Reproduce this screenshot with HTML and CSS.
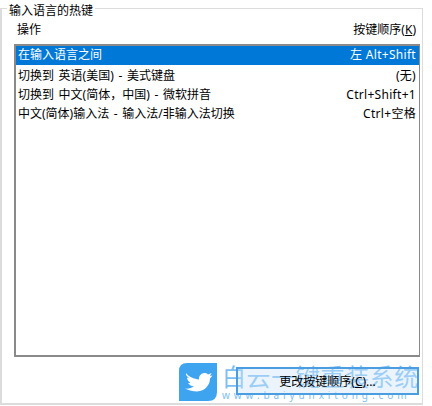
FILE: index.html
```html
<!DOCTYPE html>
<html lang="zh-CN">
<head>
    <meta charset="UTF-8">
    <title>输入语言的热键</title>
    <link rel="stylesheet" href="styles.css">
</head>
<body>

    <!-- watermark, the button shows through on top of it -->
    <div class="watermark">
        <div class="mark">
            <svg width="38" height="38" viewBox="0 0 38 38">
                <path d="M8 0H38V29Q38 38 29 38H0V8Q0 0 8 0Z" fill="#3fa4ef"/>
                <path d="M7 10C10 14 15 16 20 16.500C19.500 12.500 23 9.500 26 10C27.500 10 28.500 11 29 11.500L32.500 10L31 13L33.500 12.500L31 15.500C31 22 26 28 18 28.500C14 28.500 10 27.500 6 25.500C9.500 26 12.500 25 15 23.500C12 23 10 21.500 9 20L11.500 20C9.500 18.500 8 16.500 8 14.500L10.500 15.500C8 13.500 6.500 12 7 10Z" fill="#fff"/>
            </svg>
        </div>
        <div class="brand">
            <div class="brand-name">白云一键重装系统</div>
            <div class="brand-url">www.baiyunxitong.com</div>
        </div>
    </div>

    <div class="group">
        <div class="group-title">输入语言的热键</div>

        <div class="list-head">
            <span>操作</span>
            <span>按键顺序(<u>K</u>)</span>
        </div>

        <div class="list">
            <div class="row selected"><span class="name">在输入语言之间</span><span class="keys">左 Alt+Shift</span></div>
            <div class="row"><span class="name">切换到 英语(美国) - 美式键盘</span><span class="keys">(无)</span></div>
            <div class="row"><span class="name">切换到 中文(简体，中国) - 微软拼音</span><span class="keys">Ctrl+Shift+1</span></div>
            <div class="row"><span class="name">中文(简体)输入法 - 输入法/非输入法切换</span><span class="keys">Ctrl+空格</span></div>
        </div>

        <div class="actions">
            <button type="button">更改按键顺序(<u>C</u>)...</button>
        </div>
    </div>

</body>
</html>
```

FILE: styles.css
```css
html, body {
    margin: 0;
    height: 100%;
}

body {
    position: relative;
    background: #ffffff;
    font-family: "Noto Sans", "Noto Sans CJK SC", sans-serif;
    font-size: 12px;
    color: #000000;
    overflow: hidden;
}

.group {
    position: absolute;
    left: 0;
    top: 8px;
    box-sizing: border-box;
    width: 423px;
    height: 397px;
    border: 1px solid #dcdcdc;
    border-left-width: 2px;
    border-bottom-width: 2px;
    padding: 13px 2px 0 12px;
}

.group-title {
    position: absolute;
    left: 5px;
    top: -5px;
    padding: 0 2px;
    background: #ffffff;
    line-height: 14px;
}

.list-head {
    display: flex;
    justify-content: space-between;
    height: 22px;
    padding: 0 4px 0 3px;
    line-height: 16px;
}

.list {
    box-sizing: border-box;
    height: 313px;
    border: 2px solid #8a8a8a;
    border-right-width: 1px;
}

.row {
    display: flex;
    justify-content: space-between;
    height: 19px;
    padding: 0 3px 0 2px;
    line-height: 22px;
    white-space: nowrap;
}

.name {
    word-spacing: 1.5px;
}

.keys {
    letter-spacing: 0.3px;
}

.selected {
    background: #0078d7;
    color: #ffffff;
    line-height: 18px;
}

.actions {
    display: flex;
    justify-content: flex-end;
    margin-top: 10px;
    padding-right: 1px;
}

button {
    box-sizing: border-box;
    width: 183px;
    height: 28px;
    border: 2px solid #4a9de0;
    background: rgba(205, 228, 248, 0.4);
    padding: 0 0 1px;
    font: inherit;
    color: #000000;
}

.watermark {
    position: absolute;
    left: 179px;
    top: 363px;
    display: flex;
    gap: 5px;
    width: 244px;
}

.mark {
    width: 38px;
    height: 38px;
}

.brand {
    color: #7cc0f3;
}

.brand-name {
    font-size: 24px;
    line-height: 27px;
    letter-spacing: 0.6px;
    white-space: nowrap;
}

.brand-url {
    font-size: 10px;
    line-height: 11px;
    letter-spacing: 3.9px;
    white-space: nowrap;
}
```
